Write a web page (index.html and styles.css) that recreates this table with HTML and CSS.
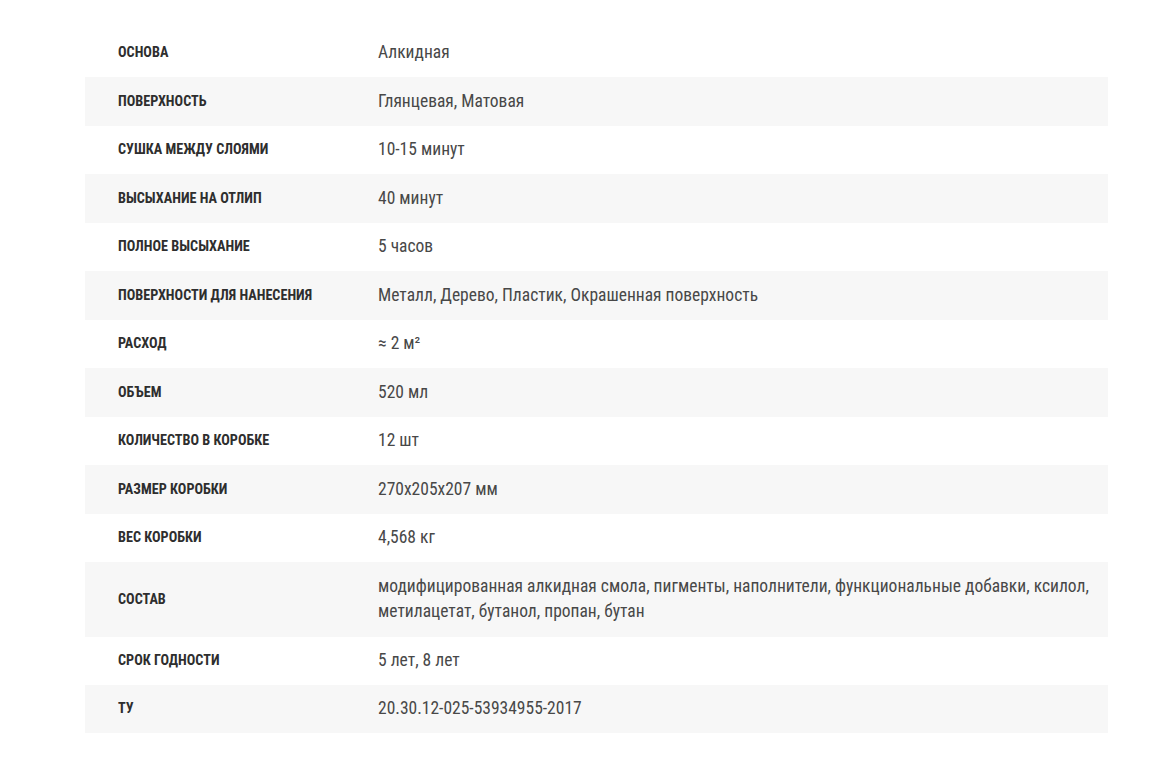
FILE: index.html
```html
<!DOCTYPE html>
<html lang="ru">
<head>
  <meta charset="UTF-8">
  <title>Характеристики</title>
  <link rel="stylesheet" href="styles.css">
</head>
<body>

  <div class="specs">
    <div class="row"><div class="name">Основа</div><div class="value">Алкидная</div></div>
    <div class="row"><div class="name">Поверхность</div><div class="value">Глянцевая, Матовая</div></div>
    <div class="row"><div class="name">Сушка между слоями</div><div class="value">10-15 минут</div></div>
    <div class="row"><div class="name">Высыхание на отлип</div><div class="value">40 минут</div></div>
    <div class="row"><div class="name">Полное высыхание</div><div class="value">5 часов</div></div>
    <div class="row"><div class="name">Поверхности для нанесения</div><div class="value">Металл, Дерево, Пластик, Окрашенная поверхность</div></div>
    <div class="row"><div class="name">Расход</div><div class="value">≈ 2 м²</div></div>
    <div class="row"><div class="name">Объем</div><div class="value">520 мл</div></div>
    <div class="row"><div class="name">Количество в коробке</div><div class="value">12 шт</div></div>
    <div class="row"><div class="name">Размер коробки</div><div class="value">270x205x207 мм</div></div>
    <div class="row"><div class="name">Вес коробки</div><div class="value">4,568 кг</div></div>
    <div class="row"><div class="name">Состав</div><div class="value">модифицированная алкидная смола, пигменты, наполнители, функциональные добавки, ксилол, метилацетат, бутанол, пропан, бутан</div></div>
    <div class="row"><div class="name">Срок годности</div><div class="value">5 лет, 8 лет</div></div>
    <div class="row"><div class="name">ТУ</div><div class="value">20.30.12-025-53934955-2017</div></div>
  </div>

</body>
</html>
```

FILE: styles.css
```css
body {
  margin: 0;
  padding: 29px 50px 26px 85px;
  background: #fff;
  font-family: 'Roboto', 'Liberation Sans', sans-serif;
  font-stretch: condensed;
  color: #333;
}

.specs {
  width: 1023px;
}

.row {
  display: grid;
  grid-template-columns: 293px 1fr;
  align-items: center;
}

.row:nth-child(even) {
  background: #f7f7f7;
}

.name {
  padding: 11.4px 20px 11.4px 33px;
  font-size: 14.2px;
  font-weight: 700;
  text-transform: uppercase;
  color: #2e2e2e;
  line-height: 25.7px;
}

.value {
  padding: 11.4px 15px 11.4px 0;
  font-size: 17.5px;
  line-height: 25.7px;
  color: #484848;
}
```
